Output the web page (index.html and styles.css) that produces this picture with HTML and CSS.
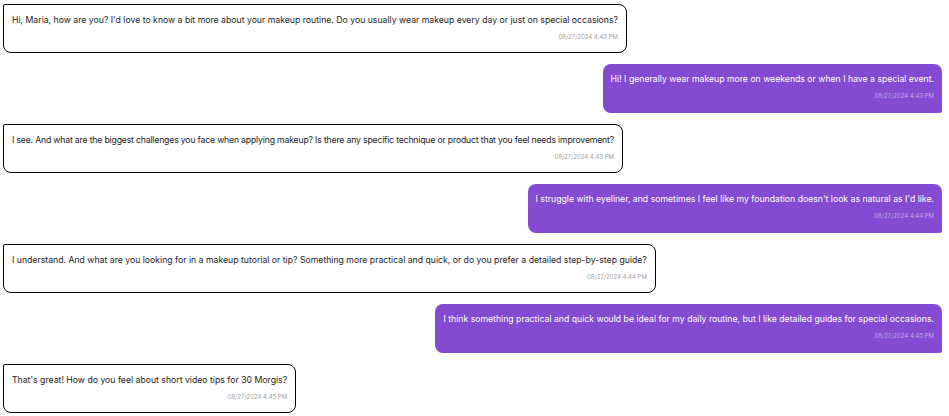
FILE: index.html
```html
<!DOCTYPE html>
<html>
<head>
<meta charset="utf-8">
<link rel="stylesheet" href="styles.css">
</head>
<body>
<div class="chat">
  <div class="msg in">
    <p class="text">Hi, Maria, how are you? I'd love to know a bit more about your makeup routine. Do you usually wear makeup every day or just on special occasions?</p>
    <span class="time">08/27/2024 4:43 PM</span>
  </div>
  <div class="msg out">
    <p class="text">Hi! I generally wear makeup more on weekends or when I have a special event.</p>
    <span class="time">08/27/2024 4:43 PM</span>
  </div>
  <div class="msg in">
    <p class="text tight">I see. And what are the biggest challenges you face when applying makeup? Is there any specific technique or product that you feel needs improvement?</p>
    <span class="time">08/27/2024 4:43 PM</span>
  </div>
  <div class="msg out">
    <p class="text">I struggle with eyeliner, and sometimes I feel like my foundation doesn't look as natural as I'd like.</p>
    <span class="time">08/27/2024 4:44 PM</span>
  </div>
  <div class="msg in">
    <p class="text">I understand. And what are you looking for in a makeup tutorial or tip? Something more practical and quick, or do you prefer a detailed step-by-step guide?</p>
    <span class="time">08/27/2024 4:44 PM</span>
  </div>
  <div class="msg out">
    <p class="text">I think something practical and quick would be ideal for my daily routine, but I like detailed guides for special occasions.</p>
    <span class="time">08/27/2024 4:45 PM</span>
  </div>
  <div class="msg in">
    <p class="text">That's great! How do you feel about short video tips for 30 Morgis?</p>
    <span class="time">08/27/2024 4:45 PM</span>
  </div>
</div>
</body>
</html>
```
FILE: styles.css
```css
html, body {
  margin: 0;
  padding: 0;
  background: #ffffff;
}
body {
  font-family: Inter, "Noto Sans", sans-serif;
}
.chat {
  display: flex;
  flex-direction: column;
  gap: 11px;
  padding: 4px 7px 0 3px;
}
.msg {
  display: flex;
  flex-direction: column;
  padding: 8px 8px 9px 8px;
  box-sizing: border-box;
  height: 49px;
  max-width: 100%;
}
.msg.in {
  align-self: flex-start;
  border: 1px solid #000;
  border-radius: 2px 8px 8px 8px;
  color: #222;
}
.msg.out {
  align-self: flex-end;
  background: #854ad2;
  border-radius: 8px 8px 2px 8px;
  color: #fff;
}
.text {
  margin: 0;
  font-size: 8.7px;
  line-height: 14px;
}
.text.tight {
  letter-spacing: -0.18px;
}
.time {
  align-self: flex-end;
  font-size: 6px;
  line-height: 10px;
  margin-top: 5px;
  color: #a0a0a0;
}
.msg.out .time {
  color: #c0acdc;
}
```
